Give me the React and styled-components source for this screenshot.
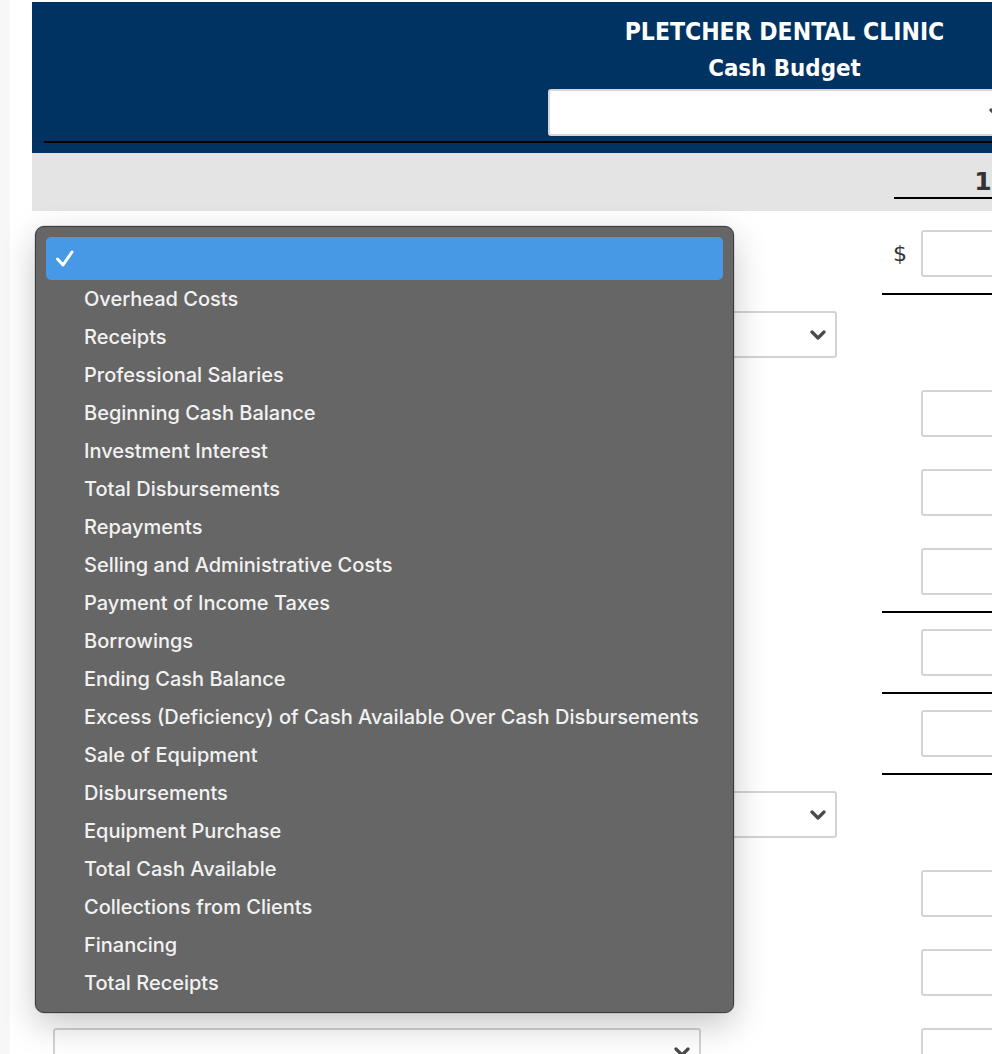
import React from "react";
import styled, { createGlobalStyle } from "styled-components";

const Global = createGlobalStyle`
  html, body { margin: 0; padding: 0; background: #fff; overflow: hidden; }
  body { font-family: "Liberation Sans", Arial, sans-serif; }
`;

const Shell = styled.div`
  display: flex;
  min-height: 1054px;
  border-left: 10px solid #f7f7f7;
`;

const Page = styled.div`
  position: relative;
  margin-left: 22px;
  margin-top: 2px;
  width: 1040px;
  flex: none;
`;

const Header = styled.header`
  background: #003362;
  padding: 12px 0 10px 12px;
`;

const HeadBlock = styled.div`
  margin-left: 504px;
  width: 473px;
  display: flex;
  flex-direction: column;
  align-items: center;
`;

const Title = styled.div`
  font-family: "DejaVu Sans Condensed", "DejaVu Sans", sans-serif;
  font-weight: bold;
  font-size: ${(p) => p.$size || 22}px;
  line-height: 36px;
  color: #fff;
  white-space: nowrap;
`;

const HeadSelect = styled.div`
  margin-top: 3px;
  align-self: stretch;
  height: 47px;
  box-sizing: border-box;
  background: #fff;
  border: 2px solid #d6d6d6;
  border-radius: 3px;
  display: flex;
  align-items: center;
  justify-content: flex-end;
  padding-right: 14px;
`;

const Rule = styled.div`
  margin-top: 5px;
  height: 2px;
  background: #000;
`;

const Band = styled.div`
  background: #e4e4e4;
  height: 58px;
  display: grid;
  grid-template-columns: 1fr 178px;
  align-items: end;
`;

const ColHead = styled.div`
  font-family: "DejaVu Sans", sans-serif;
  font-weight: bold;
  font-size: 25px;
  color: #333;
  text-align: center;
  border-bottom: 2px solid #000;
  padding-bottom: 1px;
  margin-bottom: 12px;
  line-height: 29px;
`;

const Body = styled.div`
  display: flex;
  flex-direction: column;
  padding-top: 3px;
`;

const Row = styled.div`
  display: grid;
  grid-template-columns: 1fr 190px;
`;

const LeftCell = styled.div`
  padding: 16px 0 16px 21px;
  display: flex;
  align-items: center;
`;

const RightCell = styled.div`
  padding: 16px 0;
  display: grid;
  grid-template-columns: 39px 1fr;
  align-items: center;
  border-bottom: ${(p) => (p.$line ? "2px solid #000" : "none")};
`;

const Dollar = styled.span`
  font-family: "DejaVu Sans", sans-serif;
  font-size: 22px;
  color: #333;
  text-align: center;
  padding-right: 3px;
`;

const Input = styled.div`
  height: 47px;
  box-sizing: border-box;
  border: 2px solid #d3d3d3;
  border-radius: 3px;
  background: #fff;
  visibility: ${(p) => (p.$hidden ? "hidden" : "visible")};
`;

const SelectBox = styled.div`
  width: ${(p) => p.$w}px;
  height: 47px;
  box-sizing: border-box;
  border: 2px solid #d3d3d3;
  border-radius: 3px;
  background: #fff;
  display: flex;
  align-items: center;
  justify-content: flex-end;
  padding-right: 9px;
`;

const Chevron = () => (
  <svg width="16" height="10" viewBox="0 0 16 10">
    <polyline points="2,2 8,8 14,2" fill="none" stroke="#4a4a4a" strokeWidth="3.2" strokeLinecap="round" strokeLinejoin="round" />
  </svg>
);

const Menu = styled.div`
  position: absolute;
  left: 3px;
  top: 224px;
  width: 699px;
  box-sizing: border-box;
  padding: 10px 10px 10px;
  background: #666666;
  border: 1px solid #3c3c3c;
  border-radius: 9px;
  box-shadow: 0 12px 34px rgba(0, 0, 0, 0.22), 0 0 0 0.5px rgba(0, 0, 0, 0.2);
`;

const Item = styled.div`
  height: ${(p) => (p.$active ? 43 : 38)}px;
  display: flex;
  align-items: center;
  padding-left: ${(p) => (p.$active ? 9 : 38)}px;
  border-radius: 5px;
  background: ${(p) => (p.$active ? "#4799e6" : "transparent")};
  font-family: Inter, "Noto Sans", sans-serif;
  font-weight: 500;
  font-size: 20px;
  color: #f2f2f2;
  white-space: nowrap;
`;

const Check = () => (
  <svg width="20" height="19" viewBox="0 0 20 19">
    <polyline points="2.5,10 8,16 17,3" fill="none" stroke="#fff" strokeWidth="3" strokeLinecap="round" strokeLinejoin="round" />
  </svg>
);

const options = [
  "Overhead Costs",
  "Receipts",
  "Professional Salaries",
  "Beginning Cash Balance",
  "Investment Interest",
  "Total Disbursements",
  "Repayments",
  "Selling and Administrative Costs",
  "Payment of Income Taxes",
  "Borrowings",
  "Ending Cash Balance",
  "Excess (Deficiency) of Cash Available Over Cash Disbursements",
  "Sale of Equipment",
  "Disbursements",
  "Equipment Purchase",
  "Total Cash Available",
  "Collections from Clients",
  "Financing",
  "Total Receipts",
];

const rows = [
  { sel: 648, dollar: true, input: true, line: true },
  { sel: 784, input: false },
  { sel: 648, input: true },
  { sel: 648, input: true },
  { sel: 648, input: true, line: true },
  { sel: 648, input: true, line: true },
  { sel: 648, input: true, line: true },
  { sel: 784, input: false },
  { sel: 648, input: true },
  { sel: 648, input: true },
  { sel: 648, input: true },
];

export default function App() {
  return (
    <>
      <Global />
      <Shell>
        <Page>
          <Header>
            <HeadBlock>
              <Title $size={24.5}>PLETCHER DENTAL CLINIC</Title>
              <Title $size={23.8}>Cash Budget</Title>
              <HeadSelect>
                <Chevron />
              </HeadSelect>
            </HeadBlock>
            <Rule />
          </Header>
          <Band>
            <div />
            <ColHead>1</ColHead>
          </Band>
          <Body>
            {rows.map((r, i) => (
              <Row key={i}>
                <LeftCell>
                  <SelectBox $w={r.sel}>
                    <Chevron />
                  </SelectBox>
                </LeftCell>
                <RightCell $line={r.line}>
                  <Dollar>{r.dollar ? "$" : ""}</Dollar>
                  <Input $hidden={!r.input} />
                </RightCell>
              </Row>
            ))}
          </Body>
          <Menu>
            <Item $active>
              <Check />
            </Item>
            {options.map((o) => (
              <Item key={o}>{o}</Item>
            ))}
          </Menu>
        </Page>
      </Shell>
    </>
  );
}
